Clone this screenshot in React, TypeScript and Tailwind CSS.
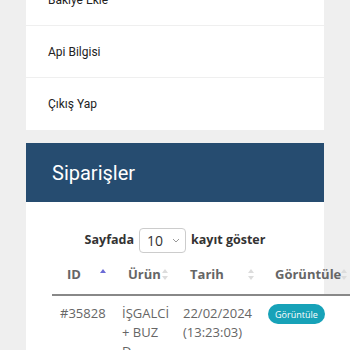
import React from "react"

function SortIcon({ active }: { active?: boolean }) {
  return (
    <svg width="6" height="11" viewBox="0 0 6 11" className="shrink-0">
      <path d="M3 0 L6 4 L0 4 Z" fill={active ? "#6b6bd6" : "#dcdcdc"} />
      {!active && <path d="M3 11 L6 7 L0 7 Z" fill="#dcdcdc" />}
    </svg>
  )
}

const menu = ["Bakiye Ekle", "Api Bilgisi", "Çıkış Yap"]

export default function App() {
  return (
    <div className="min-h-screen overflow-hidden bg-[#efefef] px-[26px] font-['Roboto',sans-serif]">
      <div className="-mt-[26px] bg-white">
        {menu.map((m, i) => (
          <div
            key={m}
            className={`flex h-[52px] items-center pl-[22px] text-[12px] text-[#222] ${
              i < menu.length - 1 ? "border-b border-[#efefef]" : ""
            }`}
          >
            {m}
          </div>
        ))}
      </div>

      <div className="mt-[13px]">
        <div className="flex h-[59px] items-center bg-[#264c70] pl-[26px] text-[20px] text-white">
          Siparişler
        </div>
        <div className="bg-white px-[26px] pt-[26px] pb-[20px] font-['Open_Sans',sans-serif]">
          <div className="flex items-center justify-center gap-[5px] text-[12.5px] font-bold text-[#333]">
            <span>Sayfada</span>
            <div className="flex h-[25px] w-[47px] items-center justify-between rounded-[4px] border border-[#ccc] pl-[7px] pr-[5px] text-[14px] font-normal">
              <span>10</span>
              <svg width="8" height="5" viewBox="0 0 8 5">
                <path d="M1 1 L4 4 L7 1" stroke="#999" strokeWidth="1" fill="none" />
              </svg>
            </div>
            <span>kayıt göster</span>
          </div>

          <table className="mt-[3px] w-[300px] table-fixed border-collapse text-left">
            <colgroup>
              <col className="w-[62px]" />
              <col className="w-[61px]" />
              <col className="w-[85px]" />
              <col className="w-[92px]" />
            </colgroup>
            <thead>
              <tr className="border-b-2 border-[#888] text-[13px] font-bold text-[#666]">
                <th className="py-[9px] pl-[15px] pr-[8px]">
                  <div className="flex items-center justify-between">
                    ID <SortIcon active />
                  </div>
                </th>
                <th className="py-[9px] pl-[14px] pr-[7px]">
                  <div className="flex items-center justify-between">
                    Ürün <SortIcon />
                  </div>
                </th>
                <th className="py-[9px] pl-[15px] pr-[6px]">
                  <div className="flex items-center justify-between">
                    Tarih <SortIcon />
                  </div>
                </th>
                <th className="py-[9px] pl-[15px] pr-[5px]">
                  <div className="flex items-center justify-between">
                    Görüntüle <SortIcon />
                  </div>
                </th>
              </tr>
            </thead>
            <tbody className="bg-white text-[13px] leading-[19px] text-[#666]">
              <tr>
                <td className="pl-[8px] pt-[8px] align-top">#35828</td>
                <td className="pl-[8px] pt-[8px] align-top">
                  İŞGALCİ
                  <br />+ BUZ
                  <br />D..
                </td>
                <td className="pl-[8px] pt-[8px] align-top">
                  22/02/2024
                  <br />
                  (13:23:03)
                </td>
                <td className="pl-[8px] pt-[8px] align-top">
                  <span className="inline-flex h-[20px] items-center rounded-full bg-[#17a2b8] px-[7px] text-[9px] leading-none text-white">
                    Görüntüle
                  </span>
                </td>
              </tr>
            </tbody>
          </table>
        </div>
      </div>
    </div>
  )
}
